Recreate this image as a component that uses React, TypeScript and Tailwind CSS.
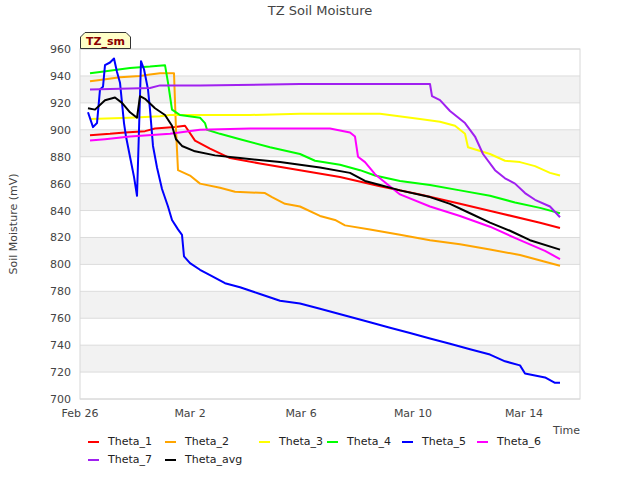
const Y = (v: number) => 399 - (v - 700) * 1.346;
type S = { name: string; color: string; pts: number[][] };
const series: S[] = [
  { name: "Theta_1", color: "#ff0000", pts: [[90,896],[110,897],[125,898],[145,899],[155,901],[175,902],[185,903],[195,892],[210,886],[230,879],[260,875],[300,870],[340,865],[380,858],[420,852],[460,845],[500,838],[540,831],[560,827]] },
  { name: "Theta_2", color: "#ffa500", pts: [[90,936],[100,937],[120,939],[140,940],[150,941],[160,942],[174,942],[176,900],[178,870],[190,866],[200,860],[220,857],[235,854],[265,853],[272,850],[285,845],[300,843],[320,836],[335,833],[345,829],[370,826],[400,822],[430,818],[460,815],[490,811],[520,807],[545,802],[560,799]] },
  { name: "Theta_3", color: "#ffff00", pts: [[90,908],[130,909],[160,910],[170,911],[250,911],[300,912],[380,912],[420,908],[440,906],[455,903],[465,897],[468,887],[490,882],[505,877],[520,876],[535,873],[550,868],[560,866]] },
  { name: "Theta_4", color: "#00ff00", pts: [[90,942],[100,943],[130,946],[150,947],[165,948],[168,935],[172,915],[180,911],[200,909],[205,905],[207,900],[220,897],[240,893],[270,887],[300,882],[315,877],[340,874],[360,870],[375,866],[400,862],[430,859],[460,855],[490,851],[515,846],[540,842],[560,838]] },
  { name: "Theta_5", color: "#0000ff", pts: [[88,913],[93,902],[97,905],[100,930],[103,932],[105,948],[110,950],[114,953],[117,943],[120,935],[124,905],[126,895],[130,880],[134,865],[137,851],[139,900],[141,951],[144,945],[148,930],[150,915],[153,888],[157,872],[162,856],[168,843],[172,833],[178,826],[182,822],[184,806],[190,801],[200,796],[210,792],[225,786],[240,783],[260,778],[280,773],[300,771],[320,767],[345,762],[370,757],[390,753],[410,749],[430,745],[450,741],[470,737],[490,733],[505,728],[520,725],[525,719],[545,716],[555,712],[560,712]] },
  { name: "Theta_6", color: "#ff00ff", pts: [[90,892],[105,893],[130,895],[170,897],[200,900],[250,901],[330,901],[350,898],[355,895],[358,880],[365,876],[375,867],[400,852],[430,843],[460,836],[490,828],[520,818],[545,810],[560,804]] },
  { name: "Theta_7", color: "#a020f0", pts: [[90,930],[150,931],[160,933],[200,933],[300,934],[430,934],[432,925],[440,922],[450,914],[465,905],[475,895],[483,882],[495,870],[505,864],[515,860],[525,853],[535,848],[550,843],[560,835]] },
  { name: "Theta_avg", color: "#000000", pts: [[88,916],[95,915],[105,922],[115,924],[122,920],[130,913],[137,909],[140,925],[145,923],[155,916],[165,911],[172,903],[176,893],[182,888],[195,884],[215,881],[240,879],[280,876],[320,872],[350,868],[365,862],[380,859],[400,855],[430,850],[450,845],[470,838],[490,831],[510,825],[530,818],[560,811]] },
];
const ticks = [700,720,740,760,780,800,820,840,860,880,900,920,940,960];
const bands = [720,760,800,840,880,920];
const xt: [number,string][] = [[80,"Feb 26"],[190,"Mar 2"],[301,"Mar 6"],[413,"Mar 10"],[524,"Mar 14"]];
const legend1: [string,string,number][] = [["Theta_1","#ff0000",77],["Theta_2","#ffa500",94],["Theta_3","#ffff00",68],["Theta_4","#00ff00",75],["Theta_5","#0000ff",75],["Theta_6","#ff00ff",80]];
const legend2: [string,string,number][] = [["Theta_7","#a020f0",77],["Theta_avg","#000000",90]];
function Item({ n, c, w }: { n: string; c: string; w: number }) {
  return (
    <div className="flex items-center" style={{ width: w }}>
      <div className="h-[2px] w-[11px]" style={{ background: c }} />
      <span className="ml-[9px]">{n}</span>
    </div>
  );
}
export default function App() {
  return (
    <div className="w-[640px] h-[480px] bg-white relative overflow-hidden" style={{ fontFamily: '"DejaVu Sans", sans-serif' }}>
      <svg width="640" height="425" className="block">
        <text x="320" y="15" textAnchor="middle" fontSize="13" fill="#444">TZ Soil Moisture</text>
        {bands.map(b => <rect key={b} x="80" y={Y(b+20)} width="500" height={Y(b)-Y(b+20)} fill="#f2f2f2" />)}
        {ticks.map(t => <line key={t} x1="80" x2="580" y1={Y(t)} y2={Y(t)} stroke="#dcdcdc" strokeWidth="1" />)}
        <rect x="80" y="49" width="500" height="350" fill="none" stroke="#d8d8d8" />
        {ticks.map(t => <text key={t} x="71" y={Y(t)+4} textAnchor="end" fontSize="11" fill="#444">{t}</text>)}
        {xt.map(([x,l]) => <text key={l} x={x} y="417" textAnchor="middle" fontSize="11" fill="#444">{l}</text>)}
        <text x="17" y="224" transform="rotate(-90 17 224)" textAnchor="middle" fontSize="11" fill="#444">Soil Moisture (mV)</text>
        {series.map(s => <polyline key={s.name} fill="none" stroke={s.color} strokeWidth="2" strokeLinejoin="round" points={s.pts.map(([x,v]) => `${x},${Y(v)}`).join(" ")} />)}
        <path d="M80.5,48.5 L80.5,37 L85,32.5 L126,32.5 L130.5,37 L130.5,48.5 Z" fill="#ffffc8" stroke="#333" />
        <text x="105.5" y="45" textAnchor="middle" fontSize="11" fontWeight="bold" fill="#8b0000">TZ_sm</text>
      </svg>
      <div className="absolute left-[553px] top-[423px] text-[11px] text-[#444]">Time</div>
      <div className="absolute left-[88px] top-[434px] text-[11px] text-[#222] flex flex-col gap-[2px]">
        <div className="flex h-[16px]">{legend1.map(([n,c,w]) => <Item key={n} n={n} c={c} w={w} />)}</div>
        <div className="flex h-[16px]">{legend2.map(([n,c,w]) => <Item key={n} n={n} c={c} w={w} />)}</div>
      </div>
    </div>
  );
}
